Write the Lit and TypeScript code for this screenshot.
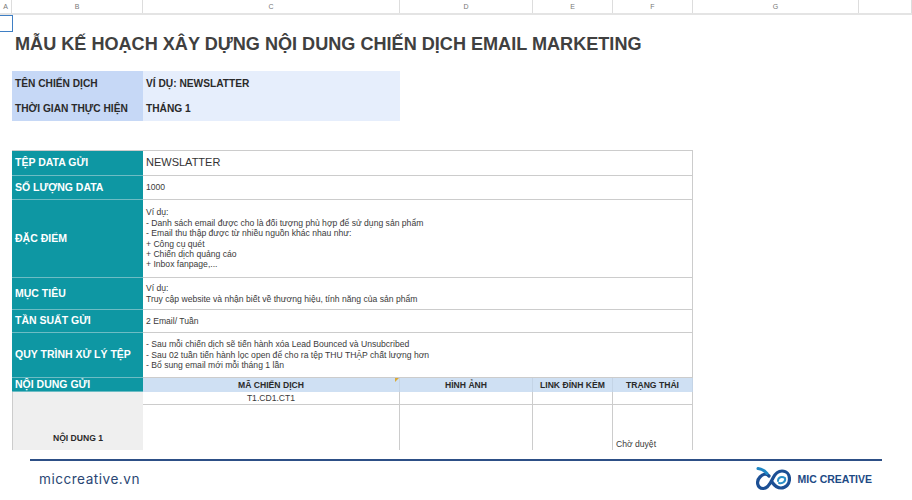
import { LitElement, html, css } from "lit";
import { customElement } from "lit/decorators.js";

const COLS: [string, number][] = [["A", 12], ["B", 131], ["C", 257], ["D", 133], ["E", 80], ["F", 80], ["G", 166], ["", 53]];

@customElement("app-root")
export class AppRoot extends LitElement {
  static styles = css`
    :host { display: block; width: 912px; height: 500px; background: #fff; overflow: hidden; font-family: "Liberation Sans", Arial, sans-serif; color: #333; }
    .sheet { height: 450px; overflow: hidden; display: flex; flex-direction: column; }
    .cols { display: flex; height: 15px; flex: none; border-bottom: 2px solid #e4e4e4; box-sizing: border-box; }
    .cols span { display: flex; align-items: center; justify-content: center; font-size: 7px; color: #777; border-right: 1px solid #ddd; box-sizing: border-box; }
    .selected { width: 13px; height: 17px; flex: none; box-sizing: border-box; border: 1px solid #3f7fc4; border-left: 0; margin-bottom: -3px; }
    .body { padding-left: 12px; display: flex; flex-direction: column; }
    h1 { margin: 2px 0 0; padding: 0 0 0 3px; height: 27px; line-height: 27px; font-size: 18.1px; font-weight: bold; color: #404040; white-space: nowrap; }
    .info { display: grid; grid-template-columns: 131px 257px; grid-template-rows: 25px 25px; margin-top: 13px; width: 388px; }
    .info div { display: flex; align-items: center; font-size: 10.2px; font-weight: bold; color: #2a2a2a; padding-left: 3px; }
    .info .k { background: #c6d8f6; }
    .info .v { background: #e6eefc; }
    .table { display: grid; grid-template-columns: 131px 257px 133px 80px 80px; grid-template-rows: 25px 24px 78px 32px 23px 45px 14px 13px 79px; margin-top: 29px; width: 681px; border-top: 1px solid #ccc; box-sizing: border-box; }
    .l { background: #0e97a3; color: #fff; font-size: 10.5px; font-weight: bold; display: flex; align-items: center; padding: 0 0 2px 3px; border-bottom: 1px solid #6dbcc4; box-sizing: border-box; white-space: nowrap; }
    .c { grid-column: span 4; font-size: 8.6px; line-height: 10.4px; color: #3a3a3a; display: flex; align-items: center; padding-left: 3px; border-bottom: 1px solid #ccc; border-right: 1px solid #ccc; box-sizing: border-box; white-space: pre; }
    .big { font-size: 11px; color: #333; padding-bottom: 2px; }
    .h { background: #cfe0f3; font-size: 8.6px; font-weight: bold; color: #2a2a2a; display: flex; align-items: center; justify-content: center; position: relative; border-right: 1px solid #c4d4e6; box-sizing: border-box; white-space: nowrap; }
    .h.tick::after { content: ""; position: absolute; top: 0; right: 0; border-style: solid; border-width: 4px 4px 0 0; border-color: #d9a93a transparent transparent transparent; }
    .noi { grid-row: span 2; background: #efefef; font-size: 8.6px; font-weight: bold; color: #2a2a2a; display: flex; align-items: center; justify-content: center; border-left: 1px solid #ccc; box-sizing: border-box; }
    .d { font-size: 8.6px; color: #3a3a3a; display: flex; align-items: center; justify-content: center; border-right: 1px solid #ccc; border-bottom: 1px solid #ccc; box-sizing: border-box; }
    .status { justify-content: flex-start; padding-left: 3px; }
    footer { height: 50px; box-sizing: border-box; padding: 9px 30px 0; }
    .rule { height: 1.5px; background: #2d4f86; }
    .foot { display: flex; align-items: center; justify-content: space-between; padding: 6px 10px 0 9px; }
    .site { font-family: Inter, "Open Sans", sans-serif; font-size: 13.6px; letter-spacing: 0.5px; color: #2a4674; }
    .brand { display: flex; align-items: center; gap: 7px; font-size: 10.5px; font-weight: bold; color: #1d4a85; }
    svg { display: block; }
  `;

  render() {
    return html`
      <div class="sheet">
        <div class="cols">${COLS.map(([n, w]) => html`<span style="width:${w}px">${n}</span>`)}</div>
        <div class="selected"></div>
        <div class="body">
          <h1>MẪU KẾ HOẠCH XÂY DỰNG NỘI DUNG CHIẾN DỊCH EMAIL MARKETING</h1>
          <div class="info">
            <div class="k">TÊN CHIẾN DỊCH</div><div class="v">VÍ DỤ: NEWSLATTER</div>
            <div class="k">THỜI GIAN THỰC HIỆN</div><div class="v">THÁNG 1</div>
          </div>
          <div class="table">
            <div class="l">TỆP DATA GỬI</div><div class="c big">NEWSLATTER</div>
            <div class="l">SỐ LƯỢNG DATA</div><div class="c">1000</div>
            <div class="l">ĐẶC ĐIỂM</div>
            <div class="c">${`Ví dụ:
- Danh sách email được cho là đối tượng phù hợp để sử dụng sản phẩm
- Email thu thập được từ nhiều nguồn khác nhau như:
+ Công cụ quét
+ Chiến dịch quảng cáo
+ Inbox fanpage,...`}</div>
            <div class="l">MỤC TIÊU</div>
            <div class="c">${`Ví dụ:
Truy cập website và nhận biết về thương hiệu, tính năng của sản phẩm`}</div>
            <div class="l">TẦN SUẤT GỬI</div><div class="c">2 Email/ Tuần</div>
            <div class="l">QUY TRÌNH XỬ LÝ TỆP</div>
            <div class="c">${`- Sau mỗi chiến dịch sẽ tiến hành xóa Lead Bounced và Unsubcribed
- Sau 02 tuần tiến hành lọc open để cho ra tệp THU THẬP chất lượng hơn
- Bổ sung email mới mỗi tháng 1 lần`}</div>
            <div class="l">NỘI DUNG GỬI</div>
            <div class="h tick">MÃ CHIẾN DỊCH</div><div class="h">HÌNH ẢNH</div><div class="h">LINK ĐÍNH KÈM</div><div class="h">TRẠNG THÁI</div>
            <div class="noi">NỘI DUNG 1</div>
            <div class="d">T1.CD1.CT1</div><div class="d"></div><div class="d"></div><div class="d"></div>
            <div class="d"></div><div class="d"></div><div class="d"></div><div class="d status">Chờ duyệt</div>
          </div>
        </div>
      </div>
      <footer>
        <div class="rule"></div>
        <div class="foot">
          <span class="site">miccreative.vn</span>
          <span class="brand">
            <svg width="36" height="24" viewBox="0 0 36 24" fill="none" stroke-linecap="round">
              <path d="M14 9 C11 6 8 7 5 10 C1 14 2 21 8 21.5 C13 22 16 15 18 11 C20 7 23 4 27 4 C32 4 34.5 8 34.5 12 C34.5 17 31 21 26 21 C22 21 19 18 17 15" stroke="#1c4f94" stroke-width="3.2"/>
              <path d="M3 1.5 C7 2 10 4 12 6.5" stroke="#1f86c4" stroke-width="3"/>
              <path d="M23 14 C23 10 27 9 30 11 C31 14 28 17 24 16" stroke="#2a8fc8" stroke-width="2"/>
            </svg>
            MIC CREATIVE
          </span>
        </div>
      </footer>
    `;
  }
}
